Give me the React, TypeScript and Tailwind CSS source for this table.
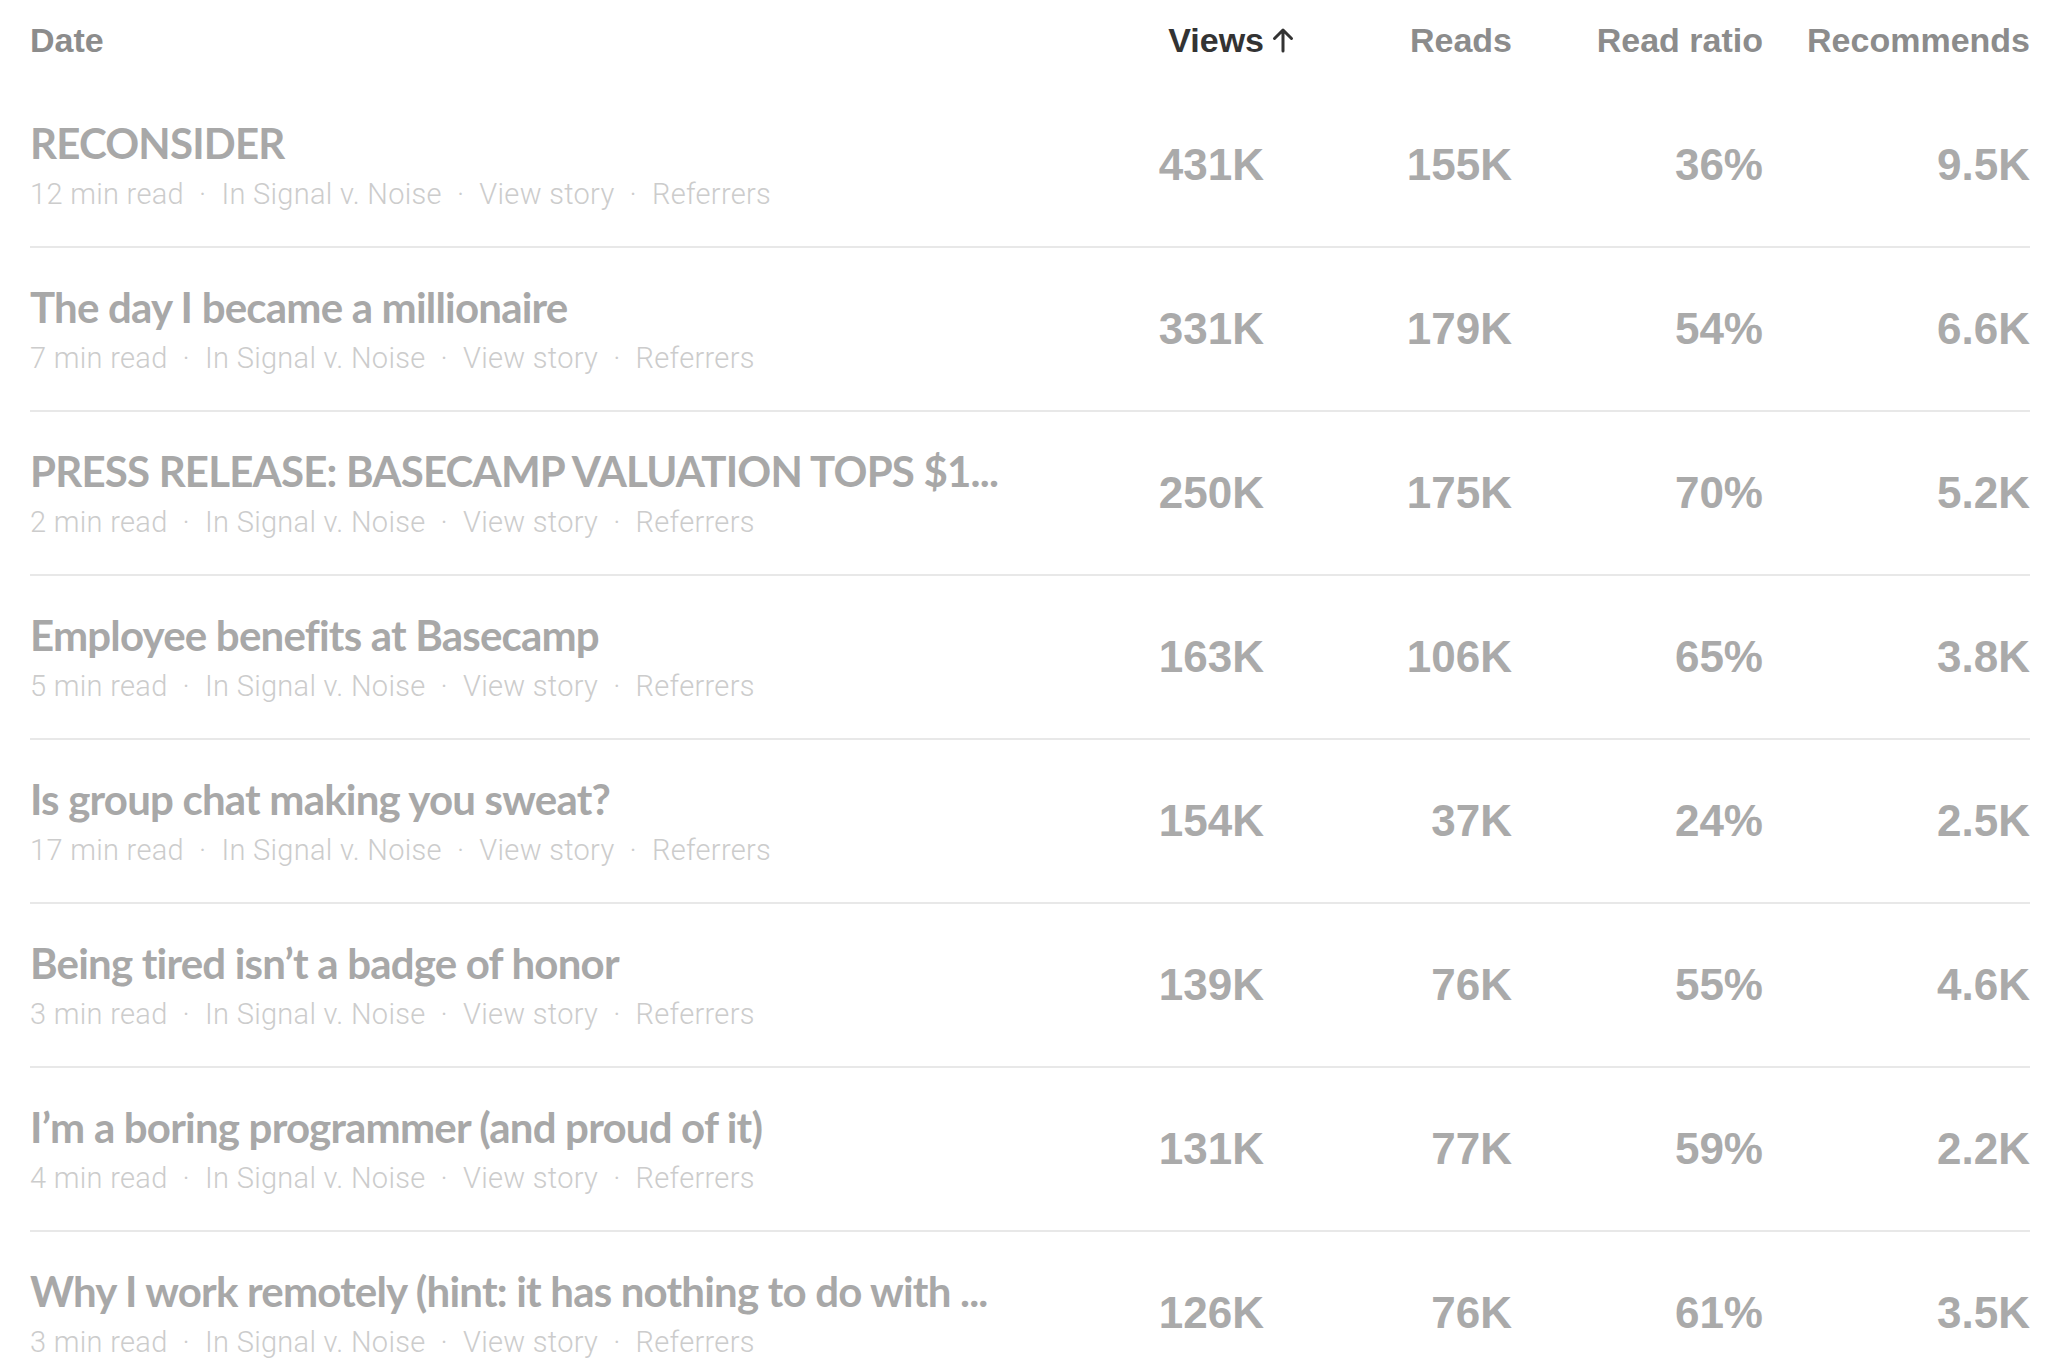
import React from "react";

interface Story {
  title: string;
  minutes: number;
  views: string;
  reads: string;
  ratio: string;
  recommends: string;
}

// titles are shown already shortened, as the stats page does
const stories: Story[] = [
  { title: "RECONSIDER", minutes: 12, views: "431K", reads: "155K", ratio: "36%", recommends: "9.5K" },
  { title: "The day I became a millionaire", minutes: 7, views: "331K", reads: "179K", ratio: "54%", recommends: "6.6K" },
  { title: "PRESS RELEASE: BASECAMP VALUATION TOPS $1...", minutes: 2, views: "250K", reads: "175K", ratio: "70%", recommends: "5.2K" },
  { title: "Employee benefits at Basecamp", minutes: 5, views: "163K", reads: "106K", ratio: "65%", recommends: "3.8K" },
  { title: "Is group chat making you sweat?", minutes: 17, views: "154K", reads: "37K", ratio: "24%", recommends: "2.5K" },
  { title: "Being tired isn’t a badge of honor", minutes: 3, views: "139K", reads: "76K", ratio: "55%", recommends: "4.6K" },
  { title: "I’m a boring programmer (and proud of it)", minutes: 4, views: "131K", reads: "77K", ratio: "59%", recommends: "2.2K" },
  { title: "Why I work remotely (hint: it has nothing to do with ...", minutes: 3, views: "126K", reads: "76K", ratio: "61%", recommends: "3.5K" },
];

const sans = { fontFamily: "'Liberation Sans', Arial, sans-serif" };

function Dot() {
  return <span className="mx-[15px]">·</span>;
}

export default function App() {
  return (
    <div className="min-h-screen bg-white pl-[30px] pr-[42px] overflow-hidden" style={sans}>
      {/* Header */}
      <div className="flex items-center h-[84px] text-[34px] font-bold text-[#8c8c8c] pb-[4px]">
        <div className="flex-1 min-w-0">Date</div>
        <div className="w-[250px] text-right text-[#333333] relative">
          Views
          <svg
            className="absolute right-[-31px] top-1/2 -translate-y-1/2"
            width="24"
            height="26"
            viewBox="0 0 24 26"
            fill="none"
            stroke="#333333"
            strokeWidth="3"
            strokeLinecap="round"
            strokeLinejoin="round"
          >
            <path d="M12 24V3M3.5 11.5L12 3l8.5 8.5" />
          </svg>
        </div>
        <div className="w-[248px] text-right">Reads</div>
        <div className="w-[251px] text-right">Read ratio</div>
        <div className="w-[267px] text-right">Recommends</div>
      </div>

      {/* Rows */}
      {stories.map((s) => (
        <div key={s.title} className="flex items-center h-[164px] border-b-2 border-[#e8e8e8]">
          <div className="flex-1 min-w-0">
            <div
              className="whitespace-nowrap text-[42px] font-bold text-[#a8a8a8] leading-[50px] tracking-[-0.8px]"
              style={{ fontFamily: "Lato, 'Open Sans', sans-serif" }}
            >
              {s.title}
            </div>
            <div
              className="mt-[8px] text-[29px] font-light text-[#cccccc] leading-[36px] tracking-[0.3px]"
              style={{ fontFamily: "Roboto, 'Liberation Sans', sans-serif" }}
            >
              {s.minutes} min read
              <Dot />
              In Signal v. Noise
              <Dot />
              View story
              <Dot />
              Referrers
            </div>
          </div>
          <div className="w-[250px] text-right text-[44px] font-bold text-[#aaaaaa]">{s.views}</div>
          <div className="w-[248px] text-right text-[44px] font-bold text-[#aaaaaa]">{s.reads}</div>
          <div className="w-[251px] text-right text-[44px] font-bold text-[#aaaaaa]">{s.ratio}</div>
          <div className="w-[267px] text-right text-[44px] font-bold text-[#aaaaaa]">{s.recommends}</div>
        </div>
      ))}
    </div>
  );
}
